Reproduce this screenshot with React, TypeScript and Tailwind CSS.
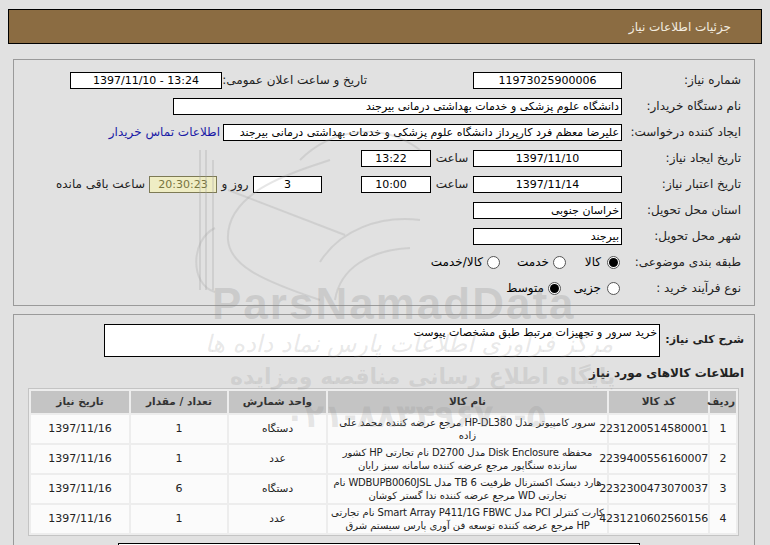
import React from 'react';

const Box = ({ className = '', children }: { className?: string; children?: React.ReactNode }) => (
  <div className={`h-[17px] shrink-0 overflow-hidden whitespace-nowrap border border-black bg-white px-[2px] text-[11px] leading-[15px] ${className}`}>
    {children}
  </div>
);

const Radio = ({ checked }: { checked?: boolean }) => (
  <span className="flex h-[13px] w-[13px] shrink-0 items-center justify-center rounded-full border border-[#555] bg-white">
    {checked && <span className="h-[9px] w-[9px] rounded-full bg-black" />}
  </span>
);

const Row = ({ label, children }: { label: string; children?: React.ReactNode }) => (
  <div className="flex h-[26px] items-center">
    <div className="w-[119px] shrink-0 text-[12px] text-[#222]">{label}</div>
    {children}
  </div>
);

const items = [
  {
    code: '2231200514580001',
    name: 'سرور کامپیوتر مدل HP-DL380 مرجع عرضه کننده محمد علی زاده',
    unit: 'دستگاه',
    qty: '1',
  },
  {
    code: '2239400556160007',
    name: 'محفظه Disk Enclosure مدل D2700 نام تجارتی HP کشور سازنده سنگاپور مرجع عرضه کننده سامانه سبز رایان',
    unit: 'عدد',
    qty: '1',
  },
  {
    code: '2232300473070037',
    name: 'هارد دیسک اکسترنال ظرفیت 6 TB مدل WDBUPB0060JSL نام تجارتی WD مرجع عرضه کننده ندا گستر کوشان',
    unit: 'دستگاه',
    qty: '6',
  },
  {
    code: '4231210602560156',
    name: 'کارت کنترلر PCI مدل Smart Array P411/1G FBWC نام تجارتی HP مرجع عرضه کننده توسعه فن آوری پارس سیستم شرق',
    unit: 'عدد',
    qty: '1',
  },
];

export default function App() {
  return (
    <div
      dir="rtl"
      className="relative h-[545px] w-[770px] overflow-hidden bg-[#e1e1e1] pt-[9px] font-['DejaVu_Sans',sans-serif] text-[11px] text-black"
    >
      {/* Header */}
      <div className="mx-[8px] flex h-[35px] items-center border border-black bg-[#8b6c42] pr-[30px] text-[12px] text-[#f3ece0]">
        جزئیات اطلاعات نیاز
      </div>

      {/* Main info */}
      <div className="mr-[15px] ml-[13px] mt-[15px] border border-[#9a9a9a] pt-[7px] pr-[13px] pb-[4px]">
        <Row label="شماره نیاز:">
          <Box className="w-[149px] text-center">11973025900006</Box>
          <div className="w-[106px] shrink-0" />
          <div className="w-[145px] shrink-0 text-[12px] text-[#222]">تاریخ و ساعت اعلان عمومی:</div>
          <Box className="w-[152px] text-center">
            <span dir="ltr">1397/11/10 - 13:24</span>
          </Box>
        </Row>
        <Row label="نام دستگاه خریدار:">
          <Box className="w-[449px]">دانشگاه علوم پزشکی و خدمات بهداشتی درمانی بیرجند</Box>
        </Row>
        <Row label="ایجاد کننده درخواست:">
          <Box className="w-[399px]">علیرضا معظم فرد کارپرداز دانشگاه علوم پزشکی و خدمات بهداشتی درمانی بیرجند</Box>
          <span className="mr-[3px] text-[12px] text-[#1a1aa6]">اطلاعات تماس خریدار</span>
        </Row>
        <Row label="تاریخ ایجاد نیاز:">
          <Box className="w-[149px] text-center">1397/11/10</Box>
          <div className="w-[42px] shrink-0 text-center text-[12px] text-[#222]">ساعت</div>
          <Box className="w-[70px] pr-[12px] text-center">13:22</Box>
        </Row>
        <Row label="تاریخ اعتبار نیاز:">
          <Box className="w-[149px] text-center">1397/11/14</Box>
          <div className="w-[42px] shrink-0 text-center text-[12px] text-[#222]">ساعت</div>
          <Box className="w-[70px] pr-[12px] text-center">10:00</Box>
          <div className="w-[39px] shrink-0" />
          <Box className="w-[69px] text-center">3</Box>
          <div className="w-[36px] shrink-0 text-center text-[12px] text-[#222]">روز و</div>
          <div className="h-[17px] w-[68px] shrink-0 border border-[#7d7a55] bg-[#efedc4] text-center text-[11px] leading-[15px] text-[#77743f]">
            20:30:23
          </div>
          <span className="mr-[4px] text-[12px] text-[#222]">ساعت باقی مانده</span>
        </Row>
        <Row label="استان محل تحویل:">
          <Box className="w-[149px]">خراسان جنوبی</Box>
        </Row>
        <Row label="شهر محل تحویل:">
          <Box className="w-[149px]">بیرجند</Box>
        </Row>
        <Row label="طبقه بندی موضوعی:">
          <div className="flex w-[56px] shrink-0 items-center gap-[6px] pr-[2px]">
            <Radio checked />
            <span className="text-[12px]">کالا</span>
          </div>
          <div className="flex w-[66px] shrink-0 items-center gap-[4px]">
            <Radio />
            <span className="text-[12px]">خدمت</span>
          </div>
          <div className="flex items-center gap-[4px]">
            <Radio />
            <span className="text-[12px]">کالا/خدمت</span>
          </div>
        </Row>
        <Row label="نوع فرآیند خرید :">
          <div className="flex w-[61px] shrink-0 items-center gap-[6px] pr-[2px]">
            <Radio />
            <span className="text-[12px]">جزیی</span>
          </div>
          <div className="flex items-center gap-[4px]">
            <Radio checked />
            <span className="text-[12px]">متوسط</span>
          </div>
        </Row>
      </div>

      {/* Items */}
      <div className="mr-[15px] ml-[13px] mt-[8px] h-[300px] border border-[#9a9a9a] pt-[9px] pr-[10px]">
        <div className="flex items-center">
          <div className="w-[84px] shrink-0 whitespace-nowrap text-[11px] font-bold tracking-[-0.3px] text-[#222]">شرح کلی نیاز:</div>
          <div className="h-[33px] w-[556px] border border-black bg-white px-[2px] text-[11px] leading-[15px]">
            خرید سرور و تجهیزات مرتبط طبق مشخصات پیوست
          </div>
        </div>
        <div className="mt-[8px] text-[12px] font-bold leading-[16px] text-[#222]">اطلاعات کالاهای مورد نیاز</div>
        <table className="mt-[7px] mr-[5px] w-[711px] table-fixed border-separate border-spacing-[2px] border border-[#c4c4c4] bg-[#ededed] text-[11px]">
          <colgroup>
            <col className="w-[26px]" />
            <col className="w-[99px]" />
            <col className="w-[279px]" />
            <col className="w-[97px]" />
            <col className="w-[96px]" />
            <col className="w-[98px]" />
          </colgroup>
          <thead>
            <tr className="h-[22px] bg-[#c4c4c4] text-[10.5px] text-[#333]">
              <th className="px-[1px] font-bold">ردیف</th>
              <th className="font-bold">کد کالا</th>
              <th className="font-bold">نام کالا</th>
              <th className="font-bold">واحد شمارش</th>
              <th className="font-bold">تعداد / مقدار</th>
              <th className="font-bold">تاریخ نیاز</th>
            </tr>
          </thead>
          <tbody>
            {items.map((it, i) => (
              <tr key={it.code} className="bg-[#fbfbfb] text-[#222]">
                <td className="h-[28px] text-center">{i + 1}</td>
                <td className="text-center text-[11px] tracking-[-0.2px]">{it.code}</td>
                <td className="p-0">
                  <div className="flex h-[28px] items-center justify-center overflow-hidden px-[2px] text-center text-[10px] leading-[13px] tracking-[-0.2px]">
                    {it.name}
                  </div>
                </td>
                <td className="text-center text-[10.5px]">{it.unit}</td>
                <td className="text-center">{it.qty}</td>
                <td className="text-center">1397/11/16</td>
              </tr>
            ))}
          </tbody>
        </table>
        <div className="mt-[7px] mr-[104px] h-[30px] w-[522px] border border-black bg-white" />
      </div>

      {/* Watermark */}
      <div className="pointer-events-none absolute inset-0">
        <svg className="absolute left-0 top-0" width="770" height="545" fill="none" stroke="#9a9a9a" strokeOpacity="0.25" strokeWidth="2">
          <path d="M200 150 L200 290 M206 150 L206 290 M213 160 L213 290" />
          <path d="M330 160 C300 170 225 190 228 240 C230 265 260 280 320 300" />
          <path d="M215 228 C190 240 190 285 215 292" />
          <path d="M228 190 L345 235" />
          <path d="M320 262 C340 230 380 215 420 220" />
          <path d="M335 300 C340 268 370 250 410 248" />
          <path d="M300 160 C330 130 380 120 420 150" />
        </svg>
        <div dir="ltr" className="absolute left-[212px] top-[282px] font-['Liberation_Sans',sans-serif] text-[44px] font-bold leading-none tracking-[2px] text-[#8a8a8a]/25">
          ParsNamadData
        </div>
        <div className="absolute left-[205px] top-[332px] text-[24px] italic leading-none text-[#8a8a8a]/20">
          مرکز فراوری اطلاعات پارس نماد داده ها
        </div>
        <div className="absolute left-[230px] top-[366px] text-[22px] font-bold leading-none text-[#8a8a8a]/20">
          پایگاه اطلاع رسانی مناقصه ومزایده
        </div>
        <div dir="ltr" className="absolute left-[285px] top-[400px] text-[32px] font-bold leading-none text-[#8a8a8a]/20">
          ۰۲۱-۸۸۳۴۹۶۷۰-۵
        </div>
      </div>
    </div>
  );
}
